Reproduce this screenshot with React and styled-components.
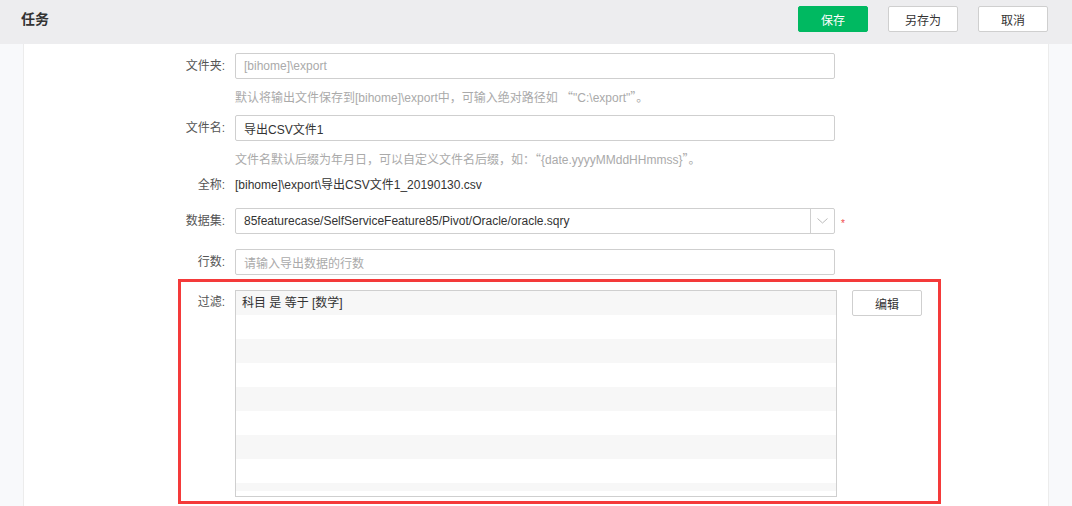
import React from "react";
import styled, { createGlobalStyle } from "styled-components";

const Global = createGlobalStyle`
  html, body { margin: 0; padding: 0; }
  body {
    width: 1072px;
    height: 506px;
    overflow: hidden;
    background: #f8f9fb;
    font-family: "Liberation Sans", "Noto Sans CJK SC", Arial, sans-serif;
    font-size: 12px;
    color: #333;
  }
`;

const Page = styled.div`
  display: flex;
  flex-direction: column;
  width: 1072px;
  height: 506px;
`;

const Header = styled.div`
  height: 44px;
  flex: none;
  background: #ededef;
  display: flex;
  align-items: flex-start;
  justify-content: space-between;
  padding: 0 24px 0 21px;
`;

const Title = styled.div`
  font-size: 14px;
  font-weight: bold;
  color: #333;
  line-height: 39px;
`;

const Actions = styled.div`
  display: flex;
  gap: 20px;
  margin-top: 6px;
`;

const Button = styled.button`
  width: 70px;
  height: 26px;
  box-sizing: border-box;
  border-radius: 2px;
  font-family: inherit;
  font-size: 12px;
  cursor: pointer;
  padding: 0;
  border: 1px solid ${(p) => (p.$primary ? "#00b961" : "#cfcfcf")};
  background: ${(p) => (p.$primary ? "#00b961" : "#fff")};
  color: ${(p) => (p.$primary ? "#fff" : "#333")};
`;

const Body = styled.div`
  flex: 1;
  display: flex;
  padding: 0 23px;
`;

const Panel = styled.div`
  flex: 1;
  background: #fff;
  border-left: 1px solid #ececec;
  border-right: 1px solid #ececec;
  padding: 9px 0 0 154px;
  display: flex;
  flex-direction: column;
`;

const Row = styled.div`
  display: flex;
  align-items: center;
  margin-top: ${(p) => p.$mt || 0}px;
`;

const Label = styled.div`
  width: ${(p) => p.$w || 57}px;
  box-sizing: border-box;
  padding-right: 10px;
  text-align: right;
  color: #555;
  flex: none;
  line-height: ${(p) => p.$lh || 26}px;
`;

const Input = styled.div`
  width: 600px;
  height: 26px;
  box-sizing: border-box;
  border: 1px solid #cfcfcf;
  border-radius: 2px;
  padding: 0 8px;
  display: flex;
  align-items: center;
  color: ${(p) => (p.$placeholder ? "#aaa" : "#333")};
  white-space: nowrap;
`;

const Hint = styled.div`
  margin-left: 57px;
  height: 18px;
  line-height: 18px;
  color: #aaa;
  white-space: nowrap;
`;

const Quote = styled.span`
  font-family: "Noto Sans CJK SC", sans-serif;
  line-height: 18px;
`;

const Value = styled.div`
  line-height: 18px;
  color: #333;
`;

const Select = styled.div`
  width: 600px;
  height: 26px;
  box-sizing: border-box;
  border: 1px solid #cfcfcf;
  border-radius: 2px;
  display: flex;
`;

const SelectText = styled.div`
  flex: 1;
  padding: 0 8px;
  display: flex;
  align-items: center;
  white-space: nowrap;
`;

const SelectArrow = styled.div`
  width: 23px;
  border-left: 1px solid #cfcfcf;
  display: flex;
  align-items: center;
  justify-content: center;
`;

const Required = styled.span`
  color: #f04848;
  font-size: 10px;
  margin-left: 6px;
  margin-top: 5px;
  line-height: 10px;
`;

const Highlight = styled.div`
  margin-top: 4px;
  width: 763px;
  height: 225px;
  box-sizing: border-box;
  border: 3px solid #f43a3a;
  padding-top: 8px;
  display: flex;
  align-items: flex-start;
`;

const FilterBox = styled.div`
  width: 602px;
  height: 207px;
  box-sizing: border-box;
  border: 1px solid #cfcfcf;
  padding-bottom: 4px;
`;

const Stripes = styled.div`
  height: 200px;
  background: repeating-linear-gradient(
    to bottom,
    #f7f7f7 0px,
    #f7f7f7 24px,
    #ffffff 24px,
    #ffffff 48px
  );
  padding-left: 6px;
  line-height: 24px;
  color: #333;
`;

const EditButton = styled(Button)`
  margin-left: 15px;
`;

export default function App() {
  return (
    <>
      <Global />
      <Page>
        <Header>
          <Title>任务</Title>
          <Actions>
            <Button $primary>保存</Button>
            <Button>另存为</Button>
            <Button>取消</Button>
          </Actions>
        </Header>
        <Body>
          <Panel>
            <Row>
              <Label>文件夹:</Label>
              <Input $placeholder>[bihome]\export</Input>
            </Row>
            <Row $mt={9}>
              <Hint>
                默认将输出文件保存到[bihome]\export中，可输入绝对路径如 <Quote>“</Quote>"C:\export"<Quote>”</Quote>。
              </Hint>
            </Row>
            <Row $mt={9}>
              <Label>文件名:</Label>
              <Input>导出CSV文件1</Input>
            </Row>
            <Row $mt={9}>
              <Hint>
                文件名默认后缀为年月日，可以自定义文件名后缀，如：<Quote>“</Quote>{"{date.yyyyMMddHHmmss}"}<Quote>”</Quote>。
              </Hint>
            </Row>
            <Row $mt={8}>
              <Label $lh={18}>全称:</Label>
              <Value>[bihome]\export\导出CSV文件1_20190130.csv</Value>
            </Row>
            <Row $mt={14}>
              <Label>数据集:</Label>
              <Select>
                <SelectText>85featurecase/SelfServiceFeature85/Pivot/Oracle/oracle.sqry</SelectText>
                <SelectArrow>
                  <svg width="11" height="6" viewBox="0 0 11 6">
                    <path d="M0.5 0.5 L5.5 5 L10.5 0.5" fill="none" stroke="#bbb" strokeWidth="1" />
                  </svg>
                </SelectArrow>
              </Select>
              <Required>*</Required>
            </Row>
            <Row $mt={15}>
              <Label>行数:</Label>
              <Input $placeholder>请输入导出数据的行数</Input>
            </Row>
            <Highlight>
              <Label $w={54} $lh={24}>过滤:</Label>
              <FilterBox>
                <Stripes>科目 是 等于 [数学]</Stripes>
              </FilterBox>
              <EditButton>编辑</EditButton>
            </Highlight>
          </Panel>
        </Body>
      </Page>
    </>
  );
}
